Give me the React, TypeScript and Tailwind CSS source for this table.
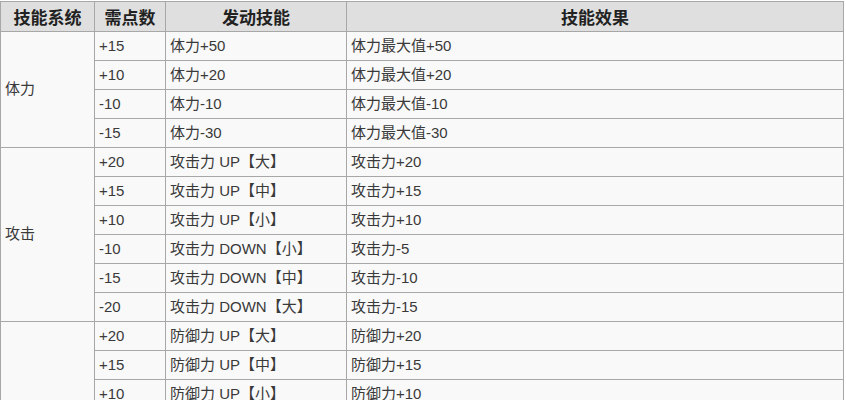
const groups = [
  {
    name: "体力",
    rows: [
      ["+15", "体力+50", "体力最大值+50"],
      ["+10", "体力+20", "体力最大值+20"],
      ["-10", "体力-10", "体力最大值-10"],
      ["-15", "体力-30", "体力最大值-30"],
    ],
  },
  {
    name: "攻击",
    rows: [
      ["+20", "攻击力 UP【大】", "攻击力+20"],
      ["+15", "攻击力 UP【中】", "攻击力+15"],
      ["+10", "攻击力 UP【小】", "攻击力+10"],
      ["-10", "攻击力 DOWN【小】", "攻击力-5"],
      ["-15", "攻击力 DOWN【中】", "攻击力-10"],
      ["-20", "攻击力 DOWN【大】", "攻击力-15"],
    ],
  },
  {
    name: "防御",
    rows: [
      ["+20", "防御力 UP【大】", "防御力+20"],
      ["+15", "防御力 UP【中】", "防御力+15"],
      ["+10", "防御力 UP【小】", "防御力+10"],
      ["-10", "防御力 DOWN【小】", "防御力-5"],
      ["-15", "防御力 DOWN【中】", "防御力-10"],
      ["-20", "防御力 DOWN【大】", "防御力-15"],
    ],
  },
];

// plain wiki-style table, collapsed 1px borders
const cell = "border border-[#a7a7a7] h-[29px] px-[4px] py-0 text-left align-middle";

export default function App() {
  return (
    <div className="bg-white min-h-screen pt-px font-['Liberation_Sans','Noto_Sans_CJK_SC',sans-serif] text-[15px] text-[#3a3a3a]">
      <table className="border-collapse table-fixed w-[844px] bg-[#f9f9f9]">
        <colgroup>
          <col className="w-[94px]" />
          <col className="w-[71px]" />
          <col className="w-[181px]" />
          <col />
        </colgroup>
        <thead>
          <tr className="bg-[#dfdfdf] text-[#222]">
            {["技能系统", "需点数", "发动技能", "技能效果"].map((h) => (
              <th key={h} className="border border-[#a7a7a7] h-[30px] p-0 text-center font-bold text-[17px] font-['Noto_Sans_CJK_SC',sans-serif]">
                {h}
              </th>
            ))}
          </tr>
        </thead>
        <tbody>
          {groups.map((g) =>
            g.rows.map((r, i) => (
              <tr key={g.name + i}>
                {i === 0 && (
                  <td rowSpan={g.rows.length} className={cell}>
                    {g.name}
                  </td>
                )}
                <td className={cell}>{r[0]}</td>
                <td className={cell}>{r[1]}</td>
                <td className={cell}>{r[2]}</td>
              </tr>
            ))
          )}
        </tbody>
      </table>
    </div>
  );
}
